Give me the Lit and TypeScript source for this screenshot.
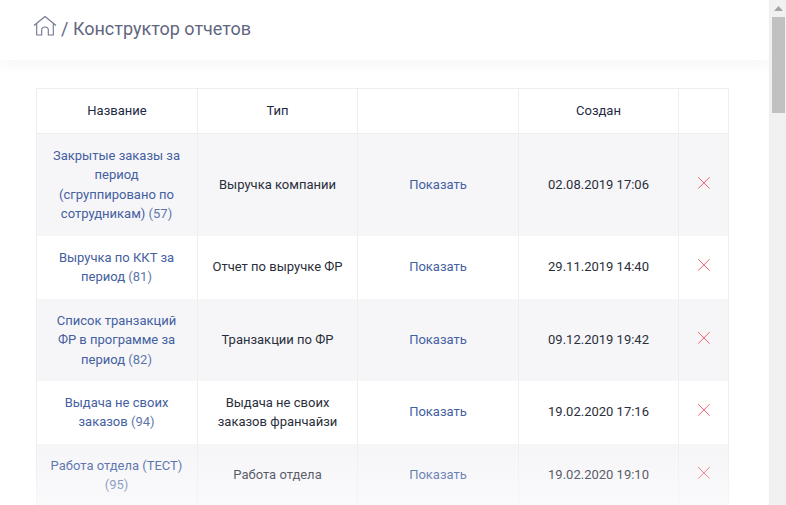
import { LitElement, html, css, svg } from "lit";
import { customElement } from "lit/decorators.js";

const rows = [
  { name: "Закрытые заказы за период (сгруппировано по сотрудникам)", id: 57, type: "Выручка компании", date: "02.08.2019 17:06" },
  { name: "Выручка по ККТ за период", id: 81, type: "Отчет по выручке ФР", date: "29.11.2019 14:40" },
  { name: "Список транзакций ФР в программе за период", id: 82, type: "Транзакции по ФР", date: "09.12.2019 19:42" },
  { name: "Выдача не своих заказов", id: 94, type: "Выдача не своих заказов франчайзи", date: "19.02.2020 17:16" },
  { name: "Работа отдела (ТЕСТ)", id: 95, type: "Работа отдела", date: "19.02.2020 19:10" },
  { name: "Остатки на складе", id: 96, type: "Остатки", date: "20.02.2020 11:25" },
];

@customElement("app-root")
export class AppRoot extends LitElement {
  static styles = css`
    :host {
      display: flex;
      width: 786px;
      height: 505px;
      overflow: hidden;
      background: #fff;
      font-family: Roboto, "Noto Sans", sans-serif;
      font-size: 13px;
      line-height: 19.5px;
      color: #2a2e3a;
    }
    .main {
      flex: 1;
      min-width: 0;
      position: relative;
      overflow: hidden;
    }
    .header {
      height: 60px;
      box-sizing: border-box;
      padding: 15px 0 0 33px;
      display: flex;
      align-items: flex-start;
      gap: 4px;
      background: #fff;
      box-shadow: 0 2px 14px rgba(40, 50, 80, 0.06);
      color: #62667f;
      font-size: 18px;
      line-height: 27px;
    }
    .home {
      width: 24px;
      height: 23px;
      flex: none;
    }
    .content {
      padding: 28px 40px 0 36px;
    }
    table {
      width: 692px;
      border-collapse: collapse;
      table-layout: fixed;
    }
    th, td {
      border-left: 1px solid #eeeeee;
      border-right: 1px solid #eeeeee;
      padding: 12px 12px;
      text-align: center;
      vertical-align: middle;
      font-weight: 400;
    }
    th {
      border-top: 1px solid #eeeeee;
      border-bottom: 1px solid #eeeeee;
      color: #232845;
    }
    td:first-child {
      padding-left: 11.5px;
      padding-right: 12.5px;
    }
    tbody tr:nth-child(odd) {
      background: #f6f6f9;
    }
    tbody tr:nth-child(3) td {
      padding-bottom: 11.5px;
    }
    .link {
      color: #44609f;
    }
    .id {
      color: #5f76ab;
    }
    .x {
      display: block;
      width: 14px;
      height: 14px;
      margin: -4px auto 0;
    }
    .fade {
      position: absolute;
      left: 0;
      right: 0;
      bottom: 0;
      height: 60px;
      background: linear-gradient(rgba(255, 255, 255, 0), rgba(255, 255, 255, 0.45));
      pointer-events: none;
    }
    .scrollbar {
      width: 17px;
      flex: none;
      box-sizing: border-box;
      background: #f1f1f1;
      border-left: 1px solid #eeeeee;
      display: flex;
      flex-direction: column;
      align-items: center;
    }
    .arrow {
      height: 17px;
      flex: none;
      display: flex;
      align-items: center;
      justify-content: center;
    }
    .arrow svg { width: 9px; height: 5px; display: block; }
    .thumb {
      width: 13px;
      height: 96px;
      background: #c1c1c1;
      margin-left: 1px;
    }
  `;

  private icon() {
    return html`<svg class="x" viewBox="0 0 14 14" fill="none" stroke="#f4606c" stroke-width="1">
      ${svg`<path d="M1.2 1.2 12.6 12.6M12.6 1.2 1.2 12.6" />`}
    </svg>`;
  }

  render() {
    return html`
      <div class="main">
        <div class="header">
          <svg class="home" viewBox="0 0 24 23" fill="none" stroke="#70748f" stroke-width="1.1">
            <path d="M1 10.5 12 1.5 23 10.5" />
            <path d="M3.7 8.5V20H8.7V15C8.7 11 15.3 11 15.3 15V20H20.3V8.5" />
          </svg>
          <span>/ Конструктор отчетов</span>
        </div>
        <div class="content">
          <table>
            <colgroup>
              <col style="width:161px" />
              <col style="width:160px" />
              <col style="width:161px" />
              <col style="width:160px" />
              <col style="width:50px" />
            </colgroup>
            <thead>
              <tr><th>Название</th><th>Тип</th><th></th><th>Создан</th><th></th></tr>
            </thead>
            <tbody>
              ${rows.map(
                (r) => html`<tr>
                  <td><span class="link">${r.name}</span> <span class="id">(${r.id})</span></td>
                  <td>${r.type}</td>
                  <td><span class="link">Показать</span></td>
                  <td>${r.date}</td>
                  <td>${this.icon()}</td>
                </tr>`
              )}
            </tbody>
          </table>
        </div>
        <div class="fade"></div>
      </div>
      <div class="scrollbar">
        <div class="arrow">
          <svg viewBox="0 0 9 5"><path d="M4.5 0 9 5H0Z" fill="#a3a3a3" /></svg>
        </div>
        <div class="thumb"></div>
      </div>
    `;
  }
}
